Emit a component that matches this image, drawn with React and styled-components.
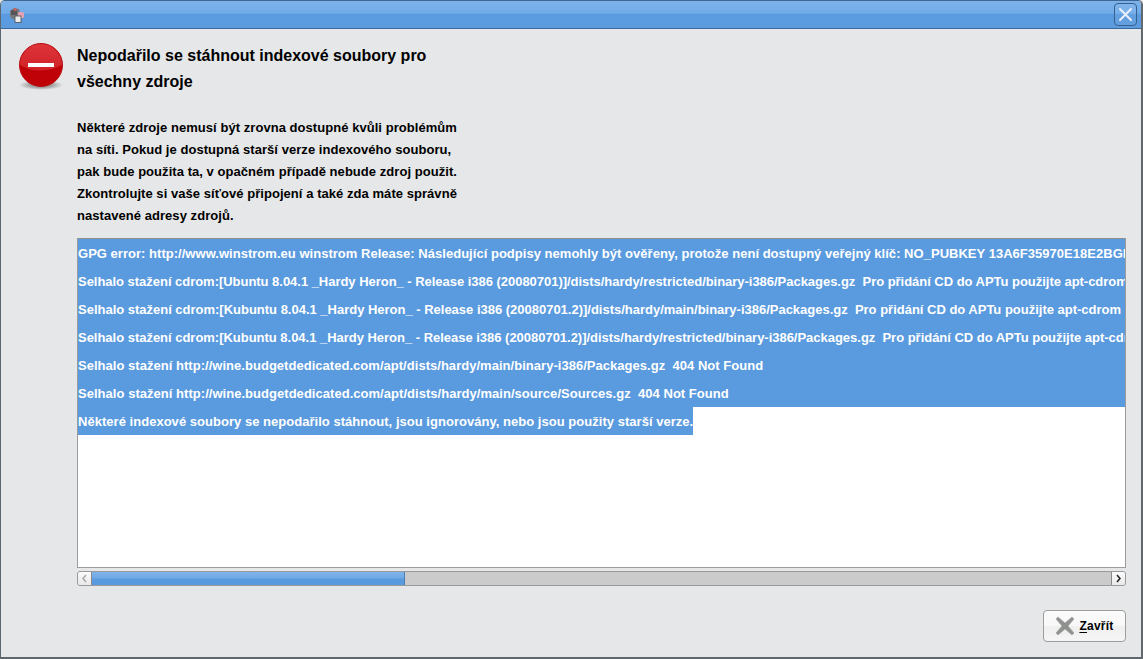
import React from "react";
import styled, { createGlobalStyle } from "styled-components";

const Global = createGlobalStyle`
  html, body { margin: 0; padding: 0; background: #e6e7e8; }
  body { font-family: "Liberation Sans", Arial, sans-serif; }
  #root { width: 1143px; height: 659px; overflow: hidden; }
`;

const Window = styled.div`
  width: 1143px; height: 659px; box-sizing: border-box;
  display: flex; flex-direction: column;
  background: #e6e7e8; border-radius: 5px 5px 0 0; overflow: hidden;
  border: 1px solid #5d6770; border-top-color: #3f6591;
  border-bottom-width: 2px; border-right-width: 2px; border-right-color: #62686e;
`;
const TitleBar = styled.div`
  height: 28px; flex: none; box-sizing: border-box;
  display: flex; align-items: center; justify-content: space-between;
  padding: 0 4px 0 8px;
  background: linear-gradient(#7db3ea 0%, #70abe8 45%, #5a9ade 50%, #5b9bde 100%);
  border-bottom: 1px solid #3d6a9c;
`;
const CloseButton = styled.div`
  width: 23px; height: 23px; box-sizing: border-box; display: flex;
  align-items: center; justify-content: center;
  border: 1px solid #35608f; border-radius: 4px;
  background: rgba(255, 255, 255, 0.06);
`;
const Body = styled.div`
  flex: 1; display: flex; flex-direction: column; min-height: 0;
  padding: 14px 15px 15px 18px;
`;
const Header = styled.div`display: flex; gap: 14px; align-items: flex-start;`;
const IconBox = styled.div`width: 44px; height: 48px; flex: none;`;
const TextCol = styled.div`display: flex; flex-direction: column;`;
const Heading = styled.div`
  width: 380px; font-size: 16px; font-weight: 700; line-height: 26px; color: #000;
`;
const Description = styled.div`
  width: 400px; margin-top: 22px; font-size: 13px; font-weight: 700; line-height: 22px;
  color: #000; letter-spacing: 0.05px;
`;
const Log = styled.div`
  margin: 11px 0 0 58px; height: 330px; box-sizing: border-box; flex: none;
  background: #fff; border: 1px solid #9c9c9c; border-top-color: #8f8f8f; overflow: hidden;
  font-size: 13px; font-weight: 700; line-height: 30px; color: #fff; white-space: pre;
`;
const LogRow = styled.div`
  height: 28px; background: #5a9ade;
  letter-spacing: ${(p) => p.$track}px;
  &:last-child { background: none; }
`;
const LastText = styled.span`display: inline-block; height: 28px; background: #5a9ade;`;
const Scrollbar = styled.div`
  margin: 3px 0 0 58px; height: 15px; box-sizing: border-box; flex: none;
  display: flex; background: #cbcbcb; border: 1px solid #9a9a9a; border-radius: 3px; overflow: hidden;
`;
const ScrollEnd = styled.div`
  width: 14px; flex: none; background: linear-gradient(#fbfbfb, #e9e9e9);
  display: flex; align-items: center; justify-content: center;
  ${(p) => (p.$right ? "border-left: 1px solid #8a8a8a;" : "border-right: 1px solid #8a8a8a;")}
  box-sizing: border-box;
`;
const Thumb = styled.div`
  width: 313px; flex: none; box-sizing: border-box; border-right: 1px solid #4c7fb5;
  background: linear-gradient(#7fb4ea, #6fa9e6 48%, #5a9ade 52%, #5a9ade);
`;
const Track = styled.div`flex: 1;`;
const Footer = styled.div`margin-top: 24px; display: flex; justify-content: flex-end;`;
const Button = styled.div`
  width: 83px; height: 32px; box-sizing: border-box; display: flex; align-items: center;
  justify-content: center; gap: 4px;
  border: 1px solid #9d9d9d; border-radius: 4px;
  background: linear-gradient(#fbfbfb 0%, #f8f8f8 50%, #efefef 52%, #f6f6f6 100%);
  font-size: 12px; font-weight: 700; color: #000; letter-spacing: 0.25px;
`;
const Mnemonic = styled.span`text-decoration: underline; text-underline-offset: 2px;`;

const AppGlyph = () => (
  <svg width="16" height="16" viewBox="0 0 16 16">
    <path d="M1 4l4-3 5 1 1 4-1 6H3L1 9z" fill="#77777c" />
    <rect x="2" y="3" width="6" height="5" fill="#55555a" />
    <rect x="9" y="5" width="6" height="6" rx="1.5" fill="#e6a3b3" />
    <rect x="6" y="9" width="6" height="6.5" fill="#ececec" stroke="#4d4d4d" strokeWidth=".8" />
    <circle cx="6" cy="2.5" r="1.6" fill="#c96060" />
  </svg>
);

const CloseGlyph = () => (
  <svg width="15" height="15" viewBox="0 0 15 15">
    <path d="M2 2l11 11M13 2L2 13" stroke="#e8f1fb" strokeWidth="2" strokeLinecap="round" />
  </svg>
);

const StopIcon = () => (
  <svg width="44" height="48" viewBox="0 0 44 48">
    <defs>
      <linearGradient id="stopTop" x1="0" y1="0" x2="0" y2="1">
        <stop offset="0" stopColor="#de353a" />
        <stop offset="1" stopColor="#cf2227" />
      </linearGradient>
      <radialGradient id="shadow">
        <stop offset="0.5" stopColor="#000" stopOpacity=".3" />
        <stop offset="1" stopColor="#000" stopOpacity="0" />
      </radialGradient>
    </defs>
    <ellipse cx="22" cy="42" rx="22" ry="5" fill="url(#shadow)" />
    <circle cx="22" cy="22" r="21.5" fill="#bf0207" stroke="#b80e13" strokeWidth="1" />
    <path d="M1 22a21 21 0 0 1 42 0q-10 5-21 5.500T1 22z" fill="url(#stopTop)" />
    <rect x="9" y="20" width="26" height="4" fill="#fff" />
  </svg>
);

const Chevron = ({ dir, color }) => (
  <svg width="7" height="9" viewBox="0 0 7 9">
    <path d={dir === "left" ? "M5 1L2 4.5 5 8" : "M2 1l3 3.5L2 8"} fill="none" stroke={color} strokeWidth="1.5" />
  </svg>
);

const ButtonX = () => (
  <svg width="20" height="20" viewBox="0 0 20 20">
    <path d="M3 1l7 6 7-6 2 2-6 7 6 7-2 2-7-6-7 6-2-2 6-7-6-7z" fill="#8f918f" stroke="#a6a8a6" strokeWidth=".8" />
  </svg>
);

const rows = [
  ["GPG error: http://www.winstrom.eu winstrom Release: Následující podpisy nemohly být ověřeny, protože není dostupný veřejný klíč: NO_PUBKEY 13A6F35970E18E2BGPG", 0.026],
  ["Selhalo stažení cdrom:[Ubuntu 8.04.1 _Hardy Heron_ - Release i386 (20080701)]/dists/hardy/restricted/binary-i386/Packages.gz  Pro přidání CD do APTu použijte apt-cdrom", -0.03],
  ["Selhalo stažení cdrom:[Kubuntu 8.04.1 _Hardy Heron_ - Release i386 (20080701.2)]/dists/hardy/main/binary-i386/Packages.gz  Pro přidání CD do APTu použijte apt-cdrom", -0.01],
  ["Selhalo stažení cdrom:[Kubuntu 8.04.1 _Hardy Heron_ - Release i386 (20080701.2)]/dists/hardy/restricted/binary-i386/Packages.gz  Pro přidání CD do APTu použijte apt-cdrom", -0.02],
  ["Selhalo stažení http://wine.budgetdedicated.com/apt/dists/hardy/main/binary-i386/Packages.gz  404 Not Found", 0.03],
  ["Selhalo stažení http://wine.budgetdedicated.com/apt/dists/hardy/main/source/Sources.gz  404 Not Found", 0.035],
];

export default function App() {
  return (
    <Window>
      <Global />
      <TitleBar>
        <AppGlyph />
        <CloseButton><CloseGlyph /></CloseButton>
      </TitleBar>
      <Body>
        <Header>
          <IconBox><StopIcon /></IconBox>
          <TextCol>
            <Heading>Nepodařilo se stáhnout indexové soubory pro všechny zdroje</Heading>
            <Description>
              Některé zdroje nemusí být zrovna dostupné kvůli problémům<br />
              na síti. Pokud je dostupná starší verze indexového souboru,<br />
              pak bude použita ta, v opačném případě nebude zdroj použit.<br />
              Zkontrolujte si vaše síťové připojení a také zda máte správně<br />
              nastavené adresy zdrojů.
            </Description>
          </TextCol>
        </Header>
        <Log>
          {rows.map(([text, track]) => <LogRow key={text} $track={track}>{text}</LogRow>)}
          <LogRow $track={0.03}><LastText>Některé indexové soubory se nepodařilo stáhnout, jsou ignorovány, nebo jsou použity starší verze.</LastText></LogRow>
        </Log>
        <Scrollbar>
          <ScrollEnd><Chevron dir="left" color="#a8a8a8" /></ScrollEnd>
          <Thumb />
          <Track />
          <ScrollEnd $right><Chevron dir="right" color="#222" /></ScrollEnd>
        </Scrollbar>
        <Footer>
          <Button><ButtonX /><span><Mnemonic>Z</Mnemonic>avřít</span></Button>
        </Footer>
      </Body>
    </Window>
  );
}
